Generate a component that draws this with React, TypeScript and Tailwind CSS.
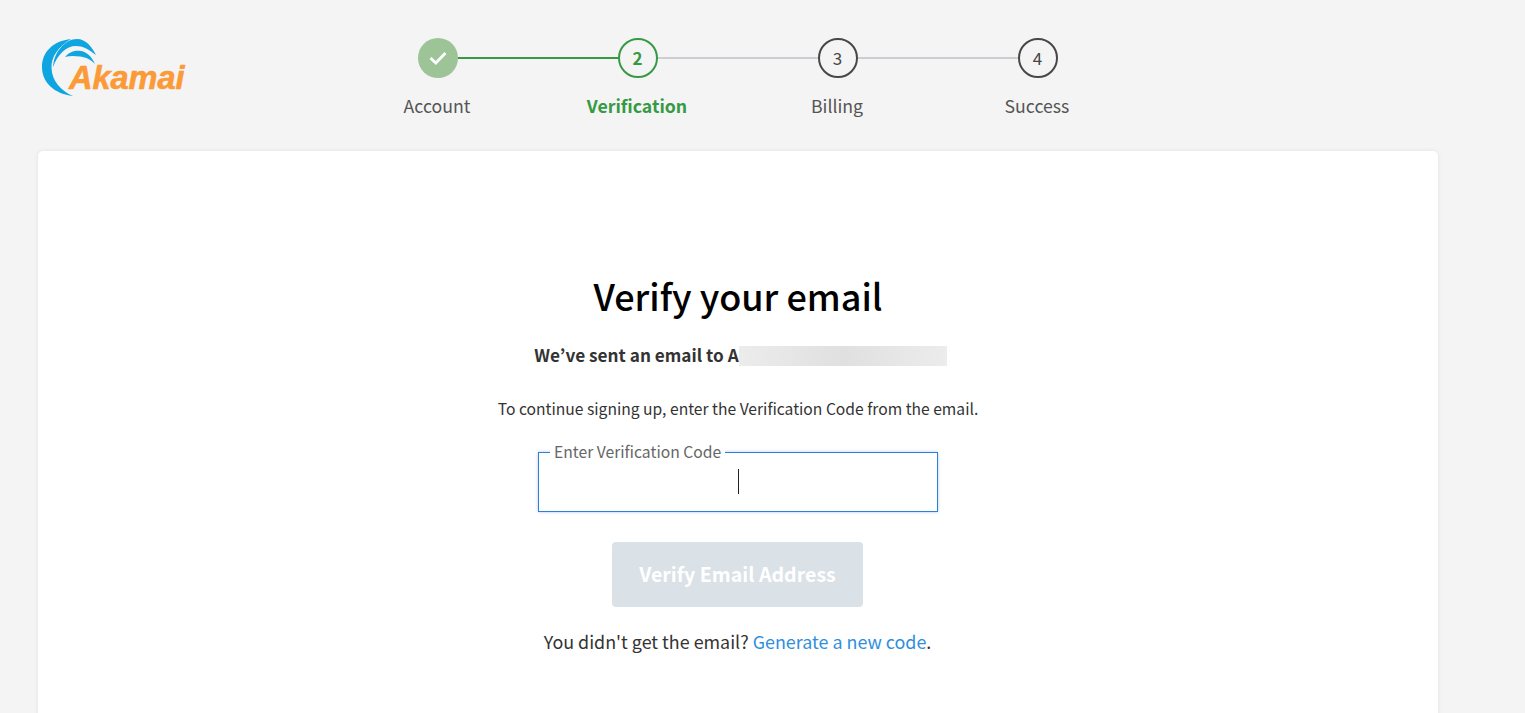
import React from 'react';

const FONT = 'font-["Noto_Sans_CJK_KR","Noto_Sans",sans-serif]';

const steps = [
  { label: 'Account', state: 'done' },
  { label: 'Verification', state: 'active' },
  { label: 'Billing', state: 'todo' },
  { label: 'Success', state: 'todo' },
];

const AkamaiLogo: React.FC = () => (
  <div className="relative w-[146px] h-[62px]">
    <svg width="70" height="62" viewBox="0 0 70 62" className="absolute left-0 top-0">
      <path
        d="M30 2 C12 4 1 15 1 30 C1 46 14 57 32 59 C20 54 11 44 10.5 31 C10 20 17 10 30 2 Z"
        fill="#0ea5e0"
      />
      <path
        d="M12 30 C13 15 24 2 36 2 C45 2 51 10 55 18 C47 12 42 9 35 9 C25 9 17 17 12 30 Z"
        fill="#0ea5e0"
      />
      <path
        d="M24 20 C29 14 35 13 40 14 C46 15 51 20 54 27 C49 22 44 20 39 19.5 C34 19 29 18.5 24 20 Z"
        fill="#0ea5e0"
      />
    </svg>
    <span className="absolute left-[28px] top-[21px] font-['Liberation_Sans',sans-serif] italic font-bold text-[32.5px] leading-[40px] [-webkit-text-stroke:0.6px_#fb9a36] text-[#fb9a36]">
      Akamai
    </span>
  </div>
);

const StepCircle: React.FC<{ index: number; state: string }> = ({ index, state }) => {
  if (state === 'done') {
    return (
      <div className="w-10 h-10 rounded-full bg-[#9cc497] flex items-center justify-center shrink-0">
        <svg width="18" height="14" viewBox="0 0 18 14" fill="none">
          <path d="M1.5 7 L6.8 12 L16.5 2" stroke="#ffffff" strokeWidth="2.8" />
        </svg>
      </div>
    );
  }
  if (state === 'active') {
    return (
      <div className="w-10 h-10 rounded-full border-2 border-[#369a44] bg-[#f4f4f4] flex items-center justify-center shrink-0 pr-px text-[17px] font-bold text-[#369a44]">
        {index}
      </div>
    );
  }
  return (
    <div className="w-10 h-10 rounded-full border-2 border-[#474747] bg-[#f4f4f4] flex items-center justify-center shrink-0 pr-px text-[17px] text-[#474747]">
      {index}
    </div>
  );
};

const App: React.FC = () => {
  return (
    <div className={`${FONT} h-[713px] w-full overflow-hidden bg-[#f4f4f4] text-[#333]`}>
      <div className="flex h-[151px]">
        <div className="pl-[41px] pt-[37px] w-[337px] shrink-0">
          <AkamaiLogo />
        </div>
        <div className="w-[800px] pt-[38px]">
          <div className="flex items-center pl-[81px]">
            {steps.map((step, i) => (
              <React.Fragment key={step.label}>
                <StepCircle index={i + 1} state={step.state} />
                {i < steps.length - 1 && (
                  <div className={`w-[160px] h-[2px] ${i === 0 ? 'bg-[#369a44]' : 'bg-[#cbcfd3]'}`} />
                )}
              </React.Fragment>
            ))}
          </div>
          <div className="flex mt-[13px]">
            {steps.map((step) => (
              <div
                key={step.label}
                className={`w-[200px] text-center text-[17.7px] leading-[28px] ${
                  step.state === 'active' ? 'font-bold text-[#369a44]' : 'text-[#555]'
                }`}
              >
                {step.label}
              </div>
            ))}
          </div>
        </div>
      </div>

      <div className="ml-[38px] w-[1400px] h-[620px] bg-white rounded-[5px] shadow-[0_0_4px_rgba(0,0,0,0.08)] flex flex-col items-center pt-[116px]">
        <h1 className="text-[36px] leading-[56px] font-medium text-black">Verify your email</h1>

        <div className="flex items-center mt-[23px] ml-[5px] h-[20px]">
          <span className="mb-[2px] text-[17.2px] font-bold text-[#333] whitespace-nowrap">We’ve sent an email to A</span>
          <div className="w-[208px] h-[20px] bg-gradient-to-r from-[#ececec] via-[#e0e0e0] to-[#ececec]" />
        </div>

        <p className="mt-[32px] text-[15.65px] leading-[22px] text-[#333]">
          To continue signing up, enter the Verification Code from the email.
        </p>

        <div className="relative mt-[32px] w-[400px] h-[60px] border border-[#2f80d8] shadow-[0_0_3px_rgba(47,128,216,0.4)] flex items-center justify-center">
          <span className="absolute left-[11px] top-[-11px] px-[4px] bg-white text-[15.7px] leading-[20px] text-[#666]">
            Enter Verification Code
          </span>
          <div className="w-px h-[25px] -mt-px bg-[#222]" />
        </div>

        <button className="mt-[30px] -ml-px pb-[2px] w-[251px] h-[65px] rounded-[4px] bg-[#dae1e7] text-white text-[19.6px] font-bold">
          Verify Email Address
        </button>

        <p className="mt-[20px] -ml-px text-[17.9px] leading-[28px] text-[#333]">
          You didn't get the email? <span className="text-[#2f8fdd]">Generate a new code</span>.
        </p>
      </div>
    </div>
  );
};

export default App;
